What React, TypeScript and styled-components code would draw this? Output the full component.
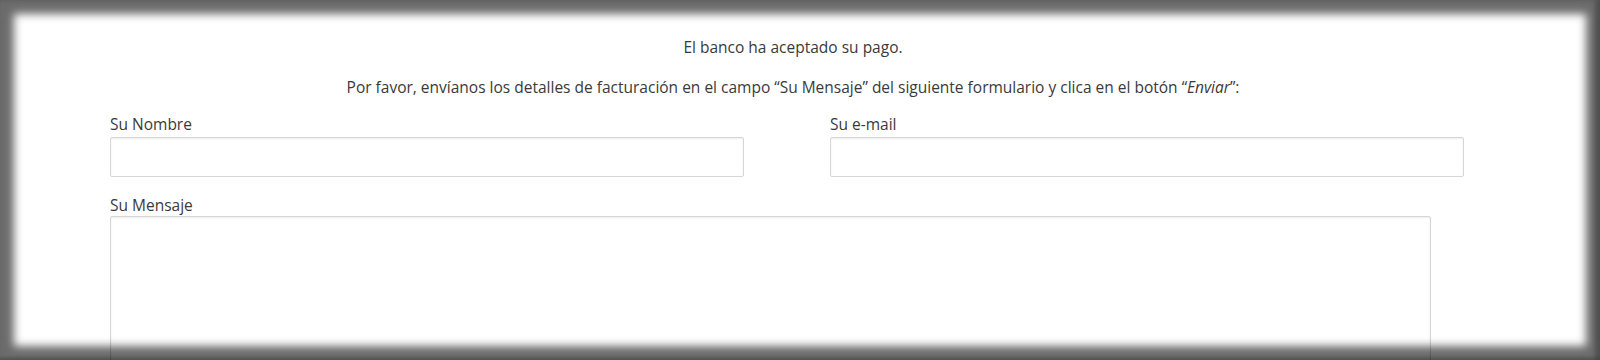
import React from "react";
import styled, { createGlobalStyle } from "styled-components";

const Global = createGlobalStyle`
  html, body { margin: 0; padding: 0; background: #ffffff; }
  body { font-family: "Open Sans", "Noto Sans", Arial, sans-serif; }
  * { box-sizing: border-box; }
`;

const Screen = styled.div`
  position: relative;
  width: 1600px;
  height: 360px;
  overflow: hidden;
  background: #ffffff;
`;

const Vignette = styled.div`
  position: absolute;
  inset: 0;
  pointer-events: none;
  box-shadow: inset 0 0 8px 14px rgba(0, 0, 0, 0.58),
    inset -5px 0 4px rgba(0, 0, 0, 0.25),
    inset 0 -3px 3px rgba(0, 0, 0, 0.15);
`;

const Content = styled.div`
  width: 1366px;
  margin-left: 110px;
  padding-top: 37px;
  color: #3a3a3a;
  font-size: 15.5px;
  line-height: 20px;
`;

const Intro = styled.div`
  display: flex;
  flex-direction: column;
  gap: 20px;
`;

const Note = styled.p`
  margin: 0;
  text-align: center;
`;

const Row = styled.div`
  display: grid;
  grid-template-columns: 634px 634px;
  column-gap: 86px;
  margin-top: 17px;
`;

const Field = styled.div`
  display: flex;
  flex-direction: column;
`;

const Label = styled.label`
  display: block;
  font-size: 15.5px;
  line-height: 20px;
  color: #3a3a3a;
  margin-bottom: 3px;
`;

const Input = styled.input`
  width: 100%;
  height: 40px;
  border: 1px solid #d6d6d6;
  border-radius: 2px;
  background: transparent;
  box-shadow: inset 0 1px 2px rgba(0, 0, 0, 0.08);
  font: inherit;
  padding: 0 8px;
`;

const MessageField = styled(Field)`
  margin-top: 18px;
`;

const TextArea = styled.textarea`
  width: 1321px;
  height: 200px;
  border: 1px solid #d6d6d6;
  border-radius: 2px;
  background: transparent;
  box-shadow: inset 0 1px 2px rgba(0, 0, 0, 0.08);
  font: inherit;
  resize: none;
  margin-top: -2px;
`;

export default function App() {
  return (
    <Screen>
      <Global />
      <Content>
        <Intro>
          <Note>El banco ha aceptado su pago.</Note>
          <Note>
            Por favor, envíanos los detalles de facturación en el campo “Su Mensaje” del siguiente
            formulario y clica en el botón “<em>Enviar</em>”:
          </Note>
        </Intro>
        <Row>
          <Field>
            <Label>Su Nombre</Label>
            <Input type="text" />
          </Field>
          <Field>
            <Label>Su e-mail</Label>
            <Input type="email" />
          </Field>
        </Row>
        <MessageField>
          <Label>Su Mensaje</Label>
          <TextArea />
        </MessageField>
      </Content>
      <Vignette />
    </Screen>
  );
}
